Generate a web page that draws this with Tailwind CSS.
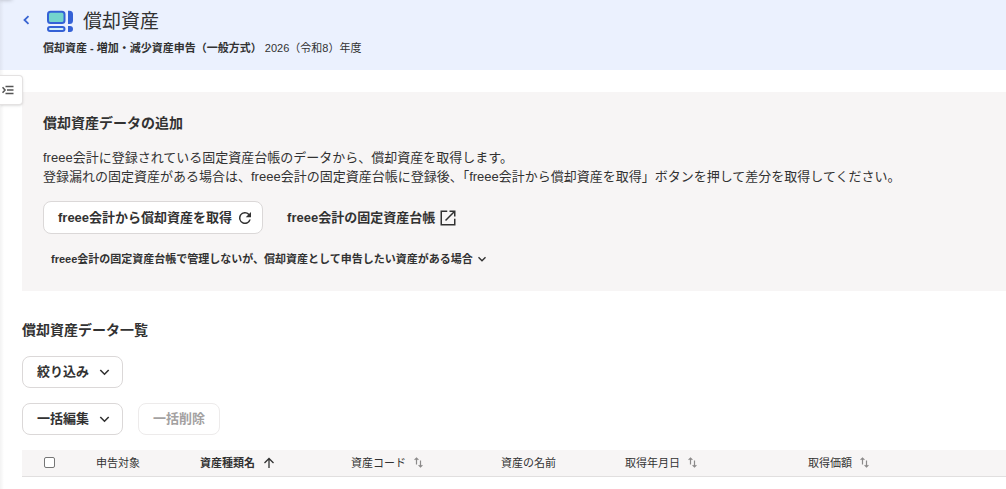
<!DOCTYPE html>
<html lang="ja">
<head>
<meta charset="utf-8">
<meta name="viewport" content="width=device-width, initial-scale=1">
<title>償却資産</title>
<script src="https://cdn.jsdelivr.net/npm/@tailwindcss/browser@4"></script>
</head>
<body class="relative min-h-screen overflow-x-hidden bg-white font-['Liberation_Sans','Noto_Sans_CJK_JP',sans-serif] text-[13px] text-[#323232]">
  <!-- Edge shadow of the collapsed side menu -->
  <div class="absolute inset-y-0 left-0 w-1 bg-linear-to-r from-black/5 to-transparent"></div>
  <div class="absolute -top-2 left-0 h-2 w-3 shadow-[0_0_4px_rgba(0,0,0,0.25)]"></div>
  <button type="button" aria-label="メニューを開く" class="absolute top-[75px] left-0 z-10 flex h-[30px] w-[23px] items-center rounded-r border border-l-0 border-[#e4e2e2] bg-white pl-0.5 shadow-sm">
    <svg class="h-3 w-3" viewBox="0 0 12 12" fill="none" stroke="#555" stroke-width="1.6"><path d="M0.500 3.200 3 6 0.500 8.800M3.500 2.500H11.500M5 6H11.500M3.500 9.500H11.500"/></svg>
  </button>

  <header class="bg-[#ebf1fe] pb-[14px]">
    <div class="flex h-10 items-center pl-[21px]">
      <a href="#" aria-label="戻る" class="mr-4 flex h-5 w-[9px] items-center justify-center">
        <svg class="h-[10px] w-2" viewBox="0 0 8 10" fill="none" stroke="#3864d2" stroke-width="1.800"><path d="M6.500 1.200 2.500 5 6.500 8.800"/></svg>
      </a>
      <svg class="mt-0.5 mr-2 h-[23px] w-[29px]" viewBox="0 0 29 23" aria-hidden="true">
        <rect x="2" y="1.800" width="16.500" height="11.200" rx="2.500" fill="#73d4cd" stroke="#3461d6" stroke-width="2"/>
        <rect x="2" y="17" width="16.500" height="4" rx="2" fill="#d3f0f7" stroke="#3461d6" stroke-width="2"/>
        <path d="M22 .800h1.500a3.500 3.500 0 0 1 3.500 3.500v6.200a3.500 3.500 0 0 1-3.500 3.500H22ZM22 16h2a3 3 0 0 1 0 6H22Z" fill="#3461d6"/>
      </svg>
      <h1 class="pt-1 text-[19px] leading-7">償却資産</h1>
    </div>
    <p class="pl-[43px] text-[11px] leading-4"><b>償却資産 - 増加・減少資産申告（一般方式）</b> 2026（令和8）年度</p>
  </header>

  <main class="pt-[22px] pl-[22px]">
    <section class="bg-[#f7f5f5] px-[21px] pt-[21px] pb-[22px]">
      <h2 class="text-[14px] leading-5 font-bold">償却資産データの追加</h2>
      <p class="mt-[15px] leading-[19px]">freee会計に登録されている固定資産台帳のデータから、償却資産を取得します。<br>登録漏れの固定資産がある場合は、freee会計の固定資産台帳に登録後、「freee会計から償却資産を取得」ボタンを押して差分を取得してください。</p>
      <div class="mt-[15px] flex items-center gap-6">
        <button type="button" class="flex h-[33px] items-center gap-1 rounded-lg border border-[#dbd8d8] bg-white pr-2 pl-[14px] font-bold">freee会計から償却資産を取得
          <svg class="h-[18px] w-[18px]" viewBox="0 0 24 24" fill="#323232"><path d="M17.650 6.350A8 8 0 1 0 19.730 14h-2.080A6 6 0 1 1 12 6c1.660 0 3.140.690 4.220 1.780L13 11h7V4z"/></svg>
        </button>
        <a href="#" class="flex items-center gap-1 font-bold">freee会計の固定資産台帳
          <svg class="h-[18px] w-[18px]" viewBox="0 0 24 24" fill="#323232"><path d="M20 20H4V4h7V2H2v20h20v-9h-2zM14 2v2h4.590L8 14.590 9.410 16 20 5.410V10h2V2z"/></svg>
        </a>
      </div>
      <button type="button" aria-expanded="false" class="mt-[15px] ml-2 flex h-5 items-center gap-1 text-[11px] font-bold">freee会計の固定資産台帳で管理しないが、償却資産として申告したい資産がある場合
        <svg class="h-2 w-2.5" viewBox="0 0 10 8" fill="none" stroke="#323232" stroke-width="1.400"><path d="m1.500 2.200 3.500 3.500 3.500-3.500"/></svg>
      </button>
    </section>

    <section class="pt-[29px]">
      <h2 class="text-[14px] leading-5 font-bold">償却資産データ一覧</h2>
      <div class="mt-4">
        <button type="button" class="flex h-8 items-center gap-2.5 rounded-lg border border-[#dbd8d8] bg-white pr-3 pl-[14px] font-bold">絞り込み
          <svg class="h-2 w-[11px]" viewBox="0 0 11 8" fill="none" stroke="#323232" stroke-width="1.600"><path d="m1.300 2 4.200 4.200L9.700 2"/></svg>
        </button>
      </div>
      <div class="mt-[15px] flex gap-[15px]">
        <button type="button" class="flex h-8 items-center gap-2.5 rounded-lg border border-[#dbd8d8] bg-white pr-3 pl-[14px] font-bold">一括編集
          <svg class="h-2 w-[11px]" viewBox="0 0 11 8" fill="none" stroke="#323232" stroke-width="1.600"><path d="m1.300 2 4.200 4.200L9.700 2"/></svg>
        </button>
        <button type="button" disabled class="h-8 rounded-lg border border-[#edebeb] bg-white px-[14px] font-bold text-[#a3a1a1]">一括削除</button>
      </div>

      <table class="mt-[15px] w-full table-fixed border-collapse text-left text-[11px]">
        <colgroup><col class="w-[60px]"><col class="w-[104px]"><col class="w-[151px]"><col class="w-[150px]"><col class="w-[124px]"><col class="w-[183px]"><col></colgroup>
        <thead>
          <tr class="h-[26px] border-b border-[#e1dfdf] bg-[#f7f5f5]">
            <th scope="col" class="pl-[22px]"><input type="checkbox" aria-label="すべて選択" class="block h-[11px] w-[11px] appearance-none rounded-xs border border-[#767676] bg-white"></th>
            <th scope="col" class="pl-[14px] font-normal">申告対象</th>
            <th scope="col" aria-sort="ascending" class="pl-[14px] font-bold"><button type="button" class="flex items-center gap-2">資産種類名
              <svg class="h-3 w-3" viewBox="0 0 12 12" fill="none" stroke="#323232" stroke-width="1.300"><path d="M6 11V1.500M1.500 6 6 1.500 10.500 6"/></svg></button></th>
            <th scope="col" class="pl-[14px] font-normal"><button type="button" class="flex items-center gap-2">資産コード
              <svg class="h-3 w-[9px]" viewBox="0 0 9 12" fill="none" stroke="#8c8a8a" stroke-width="1.200"><path d="M2.500 7.500V1M.6 2.900 2.500 1 4.400 2.900M6.500 3.500V10M4.600 8.100l1.900 1.900 1.900-1.900"/></svg></button></th>
            <th scope="col" class="pl-[14px] font-normal">資産の名前</th>
            <th scope="col" class="pl-[14px] font-normal"><button type="button" class="flex items-center gap-2">取得年月日
              <svg class="h-3 w-[9px]" viewBox="0 0 9 12" fill="none" stroke="#8c8a8a" stroke-width="1.200"><path d="M2.500 7.500V1M.6 2.900 2.500 1 4.400 2.900M6.500 3.500V10M4.600 8.100l1.900 1.900 1.900-1.900"/></svg></button></th>
            <th scope="col" class="pl-[14px] font-normal"><button type="button" class="flex items-center gap-2">取得価額
              <svg class="h-3 w-[9px]" viewBox="0 0 9 12" fill="none" stroke="#8c8a8a" stroke-width="1.200"><path d="M2.500 7.500V1M.6 2.900 2.500 1 4.400 2.900M6.500 3.500V10M4.600 8.100l1.900 1.900 1.900-1.900"/></svg></button></th>
          </tr>
        </thead>
      </table>
    </section>
  </main>
</body>
</html>
